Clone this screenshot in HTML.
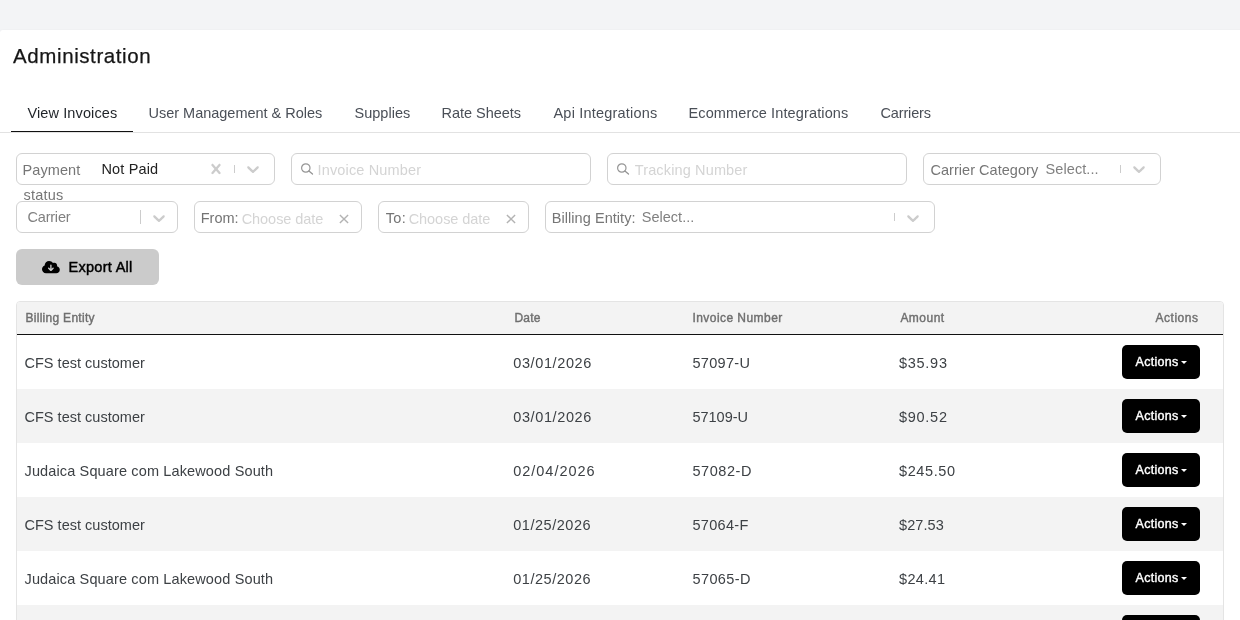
<!DOCTYPE html>
<html lang="en">
<head>
<meta charset="utf-8">
<title>Administration</title>
<meta name="viewport" content="width=1240">
<style>
*{box-sizing:border-box}
html,body{margin:0;padding:0}
body{width:1240px;height:620px;overflow:hidden;background:#f3f4f6;font-family:"Liberation Sans", Arial, sans-serif;position:relative;-webkit-font-smoothing:antialiased}
#app{position:absolute;left:0;top:0;width:1240px;height:620px;overflow:hidden;will-change:transform}
.panel{position:absolute;left:0;top:30px;width:1260px;height:640px;background:#fff;border-radius:3px 0 0 0;box-shadow:0 0 2px rgba(0,0,0,.05)}
.t{position:absolute;white-space:nowrap;margin:0;font-weight:400;display:block;text-decoration:none}
.tabs{position:absolute;left:0;top:132px;width:1240px;height:1px;background:#e2e2e2}
.tabline{position:absolute;left:11px;top:131px;width:122px;height:1px;background:#111}
.box{position:absolute;border:1px solid #d2d2d2;border-radius:6px;background:#fff}
.chev,.ico{position:absolute;display:block}
.chev path{fill:#ccc}
.sep{position:absolute;width:1px;background:#ccc;display:block}
.export{position:absolute;left:16px;top:249px;width:143px;height:36px;background:#cbcbcb;border:0;border-radius:6px;padding:0}
.tbl{position:absolute;left:16px;top:301px;width:1208px;height:400px;border:1px solid #e4e4e4;border-radius:4px;background:#fff;overflow:hidden}
.thead{position:absolute;left:0;top:0;width:1206px;height:33px;background:#f3f3f3;border-bottom:1px solid #111}
.row{position:absolute;left:0;width:1206px;height:54px}
.row.alt{background:#f3f3f3}
.abtn{position:absolute;left:1105px;top:10px;width:78px;height:34px;background:#000;border-radius:5px}
.caret{position:absolute;left:59.2px;top:15.8px;width:0;height:0;border-left:3.1px solid transparent;border-right:3.1px solid transparent;border-top:3.5px solid #fff}
</style>
</head>
<body>
<div id="app">
<div class="panel"></div>
<h1 class="t" style="left:13.10px;top:41px;font-size:20.5px;line-height:29px;letter-spacing:0.586px;color:#161616;-webkit-text-stroke:0.25px #161616;">Administration</h1>
<div class="tabs"></div><div class="tabline"></div>
<nav>
<a class="t" style="left:27.40px;top:103px;font-size:14.5px;line-height:20px;letter-spacing:0.122px;color:#1f2328;">View Invoices</a>
<a class="t" style="left:148.50px;top:103px;font-size:14.5px;line-height:20px;letter-spacing:-0.015px;color:#4a4f57;">User Management &amp; Roles</a>
<a class="t" style="left:354.50px;top:103px;font-size:14.5px;line-height:20px;letter-spacing:0.018px;color:#4a4f57;">Supplies</a>
<a class="t" style="left:441.50px;top:103px;font-size:14.5px;line-height:20px;letter-spacing:-0.03px;color:#4a4f57;">Rate Sheets</a>
<a class="t" style="left:553.50px;top:103px;font-size:14.5px;line-height:20px;letter-spacing:0.2px;color:#4a4f57;">Api Integrations</a>
<a class="t" style="left:688.50px;top:103px;font-size:14.5px;line-height:20px;letter-spacing:0.124px;color:#4a4f57;">Ecommerce Integrations</a>
<a class="t" style="left:880.50px;top:103px;font-size:14.5px;line-height:20px;letter-spacing:-0.151px;color:#4a4f57;">Carriers</a>
</nav>
<div class="box" style="left:16px;top:153px;width:259px;height:32px"></div>
<span class="t" style="left:22.50px;top:160px;font-size:14.5px;line-height:20px;letter-spacing:0.093px;color:#767676;">Payment</span><span class="t" style="left:23.50px;top:185px;font-size:14.5px;line-height:20px;letter-spacing:0.193px;color:#767676;">status</span><span class="t" style="left:101.50px;top:159px;font-size:14.5px;line-height:20px;letter-spacing:0.136px;color:#222;">Not Paid</span><svg class="chev" style="left:206px;top:159px" width="20" height="20" viewBox="0 0 20 20" aria-hidden="true"><path d="M14.348 14.849c-0.469 0.469-1.229 0.469-1.697 0l-2.651-3.030-2.651 3.029c-0.469 0.469-1.229 0.469-1.697 0-0.469-0.469-0.469-1.229 0-1.697l2.758-3.15-2.759-3.152c-0.469-0.469-0.469-1.228 0-1.697s1.228-0.469 1.697 0l2.652 3.031 2.651-3.031c0.469-0.469 1.228-0.469 1.697 0s0.469 1.229 0 1.697l-2.758 3.152 2.758 3.15c0.469 0.469 0.469 1.229 0 1.698z"/></svg><i class="sep" style="left:234px;top:165px;height:8px"></i><svg class="chev" style="left:243px;top:159px" width="20" height="20" viewBox="0 0 20 20" aria-hidden="true"><path d="M4.516 7.548c0.436-0.446 1.043-0.481 1.576 0l3.908 3.747 3.908-3.747c0.533-0.481 1.141-0.446 1.574 0 0.436 0.445 0.408 1.197 0 1.615-0.406 0.418-4.695 4.502-4.695 4.502-0.217 0.223-0.502 0.335-0.787 0.335s-0.57-0.112-0.789-0.335c0 0-4.287-4.084-4.695-4.502s-0.436-1.17 0-1.615z"/></svg>
<div class="box" style="left:291px;top:153px;width:300px;height:32px"></div><svg class="ico" style="left:300px;top:162px" width="14" height="14" viewBox="0 0 14 14" aria-hidden="true"><circle cx="5.8" cy="6" r="4.2" fill="none" stroke="#959595" stroke-width="1.2"/><path d="M8.9 9.1L12.5 12.1" stroke="#959595" stroke-width="1.3" stroke-linecap="round"/></svg><span class="t" style="left:317.50px;top:160px;font-size:14.5px;line-height:20px;letter-spacing:0.157px;color:#d4d4d4;">Invoice Number</span>
<div class="box" style="left:607px;top:153px;width:300px;height:32px"></div><svg class="ico" style="left:616px;top:162px" width="14" height="14" viewBox="0 0 14 14" aria-hidden="true"><circle cx="5.8" cy="6" r="4.2" fill="none" stroke="#959595" stroke-width="1.2"/><path d="M8.9 9.1L12.5 12.1" stroke="#959595" stroke-width="1.3" stroke-linecap="round"/></svg><span class="t" style="left:634.75px;top:160px;font-size:14.5px;line-height:20px;letter-spacing:0.137px;color:#d4d4d4;">Tracking Number</span>
<div class="box" style="left:923px;top:153px;width:238px;height:32px"></div><span class="t" style="left:930.50px;top:160px;font-size:14.5px;line-height:20px;letter-spacing:0.032px;color:#767676;">Carrier Category</span><span class="t" style="left:1045.60px;top:159px;font-size:14.5px;line-height:20px;letter-spacing:0.068px;color:#808080;">Select...</span><i class="sep" style="left:1120px;top:165px;height:8px"></i><svg class="chev" style="left:1129px;top:159px" width="20" height="20" viewBox="0 0 20 20" aria-hidden="true"><path d="M4.516 7.548c0.436-0.446 1.043-0.481 1.576 0l3.908 3.747 3.908-3.747c0.533-0.481 1.141-0.446 1.574 0 0.436 0.445 0.408 1.197 0 1.615-0.406 0.418-4.695 4.502-4.695 4.502-0.217 0.223-0.502 0.335-0.787 0.335s-0.57-0.112-0.789-0.335c0 0-4.287-4.084-4.695-4.502s-0.436-1.17 0-1.615z"/></svg>
<div class="box" style="left:16px;top:201px;width:162px;height:32px"></div><span class="t" style="left:27.50px;top:207px;font-size:14.5px;line-height:20px;letter-spacing:-0.205px;color:#808080;">Carrier</span><i class="sep" style="left:140px;top:210px;height:14px"></i><svg class="chev" style="left:149px;top:207.5px" width="20" height="20" viewBox="0 0 20 20" aria-hidden="true"><path d="M4.516 7.548c0.436-0.446 1.043-0.481 1.576 0l3.908 3.747 3.908-3.747c0.533-0.481 1.141-0.446 1.574 0 0.436 0.445 0.408 1.197 0 1.615-0.406 0.418-4.695 4.502-4.695 4.502-0.217 0.223-0.502 0.335-0.787 0.335s-0.57-0.112-0.789-0.335c0 0-4.287-4.084-4.695-4.502s-0.436-1.17 0-1.615z"/></svg>
<div class="box" style="left:194px;top:201px;width:168px;height:32px"></div><span class="t" style="left:200.80px;top:208px;font-size:14.5px;line-height:20px;letter-spacing:-0.032px;color:#747474;">From:</span><span class="t" style="left:241.70px;top:209px;font-size:14.5px;line-height:20px;letter-spacing:-0.056px;color:#d4d4d4;">Choose date</span><svg class="ico" style="left:338.8px;top:214.4px" width="10" height="10" viewBox="0 0 10 10" aria-hidden="true"><path d="M0.9 0.9L9.1 9.1M9.1 0.9L0.9 9.1" stroke="#b3b3b3" stroke-width="1.4" fill="none"/></svg>
<div class="box" style="left:378px;top:201px;width:151px;height:32px"></div><span class="t" style="left:385.75px;top:208px;font-size:14.5px;line-height:20px;letter-spacing:0.368px;color:#747474;">To:</span><span class="t" style="left:408.70px;top:209px;font-size:14.5px;line-height:20px;letter-spacing:-0.056px;color:#d4d4d4;">Choose date</span><svg class="ico" style="left:505.5px;top:214.4px" width="10" height="10" viewBox="0 0 10 10" aria-hidden="true"><path d="M0.9 0.9L9.1 9.1M9.1 0.9L0.9 9.1" stroke="#b3b3b3" stroke-width="1.4" fill="none"/></svg>
<div class="box" style="left:545px;top:201px;width:390px;height:32px"></div><span class="t" style="left:551.75px;top:208px;font-size:14.5px;line-height:20px;letter-spacing:0.055px;color:#767676;">Billing Entity:</span><span class="t" style="left:641.70px;top:207px;font-size:14.5px;line-height:20px;letter-spacing:0.03px;color:#808080;">Select...</span><i class="sep" style="left:894px;top:213px;height:8px"></i><svg class="chev" style="left:903px;top:207.5px" width="20" height="20" viewBox="0 0 20 20" aria-hidden="true"><path d="M4.516 7.548c0.436-0.446 1.043-0.481 1.576 0l3.908 3.747 3.908-3.747c0.533-0.481 1.141-0.446 1.574 0 0.436 0.445 0.408 1.197 0 1.615-0.406 0.418-4.695 4.502-4.695 4.502-0.217 0.223-0.502 0.335-0.787 0.335s-0.57-0.112-0.789-0.335c0 0-4.287-4.084-4.695-4.502s-0.436-1.17 0-1.615z"/></svg>
<button class="export" type="button"></button><svg class="ico" style="left:41.9px;top:259.5px" width="17.8" height="14.24" viewBox="0 0 640 512" aria-hidden="true"><path fill="#000" d="M144 480C64.500 480 0 415.500 0 336c0-62.800 40.200-116.200 96.200-135.900c-.1-2.700-.2-5.400-.2-8.100c0-88.400 71.600-160 160-160c59.300 0 111 32.200 138.700 80.200C409.900 102 428.300 96 448 96c53 0 96 43 96 96c0 12.200-2.300 23.800-6.400 34.600C596 238.400 640 290.100 640 352c0 70.700-57.300 128-128 128H144zm79-167l80 80c9.400 9.400 24.600 9.400 33.900 0l80-80c9.400-9.400 9.400-24.600 0-33.900s-24.600-9.400-33.900 0l-39 39V184c0-13.300-10.700-24-24-24s-24 10.700-24 24V318.100l-39-39c-9.400-9.400-24.600-9.400-33.900 0s-9.400 24.600 0 33.900z"/></svg><span class="t" style="left:68.50px;top:257px;font-size:14.5px;line-height:20px;letter-spacing:0.286px;color:#000;-webkit-text-stroke:0.45px #000;">Export All</span>
<div class="tbl"><div class="thead"></div>
<span class="t" style="left:8.45px;top:8px;font-size:12px;line-height:17px;letter-spacing:0.288px;color:#6f6f6f;-webkit-text-stroke:0.4px #6f6f6f;">Billing Entity</span><span class="t" style="left:497.40px;top:8px;font-size:12px;line-height:17px;letter-spacing:0.242px;color:#6f6f6f;-webkit-text-stroke:0.4px #6f6f6f;">Date</span><span class="t" style="left:675.45px;top:8px;font-size:12px;line-height:17px;letter-spacing:0.447px;color:#6f6f6f;-webkit-text-stroke:0.4px #6f6f6f;">Invoice Number</span><span class="t" style="left:883.40px;top:8px;font-size:12px;line-height:17px;letter-spacing:0.476px;color:#6f6f6f;-webkit-text-stroke:0.4px #6f6f6f;">Amount</span><span class="t" style="left:1138.50px;top:8px;font-size:12px;line-height:17px;letter-spacing:0.525px;color:#6f6f6f;-webkit-text-stroke:0.4px #6f6f6f;">Actions</span>
<div class="row" style="top:33px"><span class="t" style="left:7.50px;top:18px;font-size:14.5px;line-height:20px;letter-spacing:0.017px;color:#3d4145;">CFS test customer</span><span class="t" style="left:496.25px;top:18px;font-size:14.5px;line-height:20px;letter-spacing:0.61px;color:#3d4145;">03/01/2026</span><span class="t" style="left:675.50px;top:18px;font-size:14.5px;line-height:20px;letter-spacing:0.308px;color:#3d4145;">57097-U</span><span class="t" style="left:882.00px;top:18px;font-size:14.5px;line-height:20px;letter-spacing:0.723px;color:#3d4145;">$35.93</span><div class="abtn"><span class="t" style="left:13.60px;top:8px;font-size:12.5px;line-height:18px;letter-spacing:0.26px;color:#fff;-webkit-text-stroke:0.4px #fff;">Actions</span><i class="caret"></i></div></div>
<div class="row alt" style="top:87px"><span class="t" style="left:7.50px;top:18px;font-size:14.5px;line-height:20px;letter-spacing:0.017px;color:#3d4145;">CFS test customer</span><span class="t" style="left:496.25px;top:18px;font-size:14.5px;line-height:20px;letter-spacing:0.61px;color:#3d4145;">03/01/2026</span><span class="t" style="left:675.50px;top:18px;font-size:14.5px;line-height:20px;letter-spacing:-0.025px;color:#3d4145;">57109-U</span><span class="t" style="left:882.00px;top:18px;font-size:14.5px;line-height:20px;letter-spacing:0.723px;color:#3d4145;">$90.52</span><div class="abtn"><span class="t" style="left:13.60px;top:8px;font-size:12.5px;line-height:18px;letter-spacing:0.26px;color:#fff;-webkit-text-stroke:0.4px #fff;">Actions</span><i class="caret"></i></div></div>
<div class="row" style="top:141px"><span class="t" style="left:7.50px;top:18px;font-size:14.5px;line-height:20px;letter-spacing:0.135px;color:#3d4145;">Judaica Square com Lakewood South</span><span class="t" style="left:496.25px;top:18px;font-size:14.5px;line-height:20px;letter-spacing:0.971px;color:#3d4145;">02/04/2026</span><span class="t" style="left:675.50px;top:18px;font-size:14.5px;line-height:20px;letter-spacing:0.558px;color:#3d4145;">57082-D</span><span class="t" style="left:882.00px;top:18px;font-size:14.5px;line-height:20px;letter-spacing:0.608px;color:#3d4145;">$245.50</span><div class="abtn"><span class="t" style="left:13.60px;top:8px;font-size:12.5px;line-height:18px;letter-spacing:0.26px;color:#fff;-webkit-text-stroke:0.4px #fff;">Actions</span><i class="caret"></i></div></div>
<div class="row alt" style="top:195px"><span class="t" style="left:7.50px;top:18px;font-size:14.5px;line-height:20px;letter-spacing:0.017px;color:#3d4145;">CFS test customer</span><span class="t" style="left:496.25px;top:18px;font-size:14.5px;line-height:20px;letter-spacing:0.527px;color:#3d4145;">01/25/2026</span><span class="t" style="left:675.50px;top:18px;font-size:14.5px;line-height:20px;letter-spacing:0.308px;color:#3d4145;">57064-F</span><span class="t" style="left:882.00px;top:18px;font-size:14.5px;line-height:20px;letter-spacing:0.083px;color:#3d4145;">$27.53</span><div class="abtn"><span class="t" style="left:13.60px;top:8px;font-size:12.5px;line-height:18px;letter-spacing:0.26px;color:#fff;-webkit-text-stroke:0.4px #fff;">Actions</span><i class="caret"></i></div></div>
<div class="row" style="top:249px"><span class="t" style="left:7.50px;top:18px;font-size:14.5px;line-height:20px;letter-spacing:0.135px;color:#3d4145;">Judaica Square com Lakewood South</span><span class="t" style="left:496.25px;top:18px;font-size:14.5px;line-height:20px;letter-spacing:0.527px;color:#3d4145;">01/25/2026</span><span class="t" style="left:675.50px;top:18px;font-size:14.5px;line-height:20px;letter-spacing:0.392px;color:#3d4145;">57065-D</span><span class="t" style="left:882.00px;top:18px;font-size:14.5px;line-height:20px;letter-spacing:0.343px;color:#3d4145;">$24.41</span><div class="abtn"><span class="t" style="left:13.60px;top:8px;font-size:12.5px;line-height:18px;letter-spacing:0.26px;color:#fff;-webkit-text-stroke:0.4px #fff;">Actions</span><i class="caret"></i></div></div>
<div class="row alt" style="top:303px"><span class="t" style="left:7.50px;top:18px;font-size:14.5px;line-height:20px;letter-spacing:0.017px;color:#3d4145;">CFS test customer</span><span class="t" style="left:496.25px;top:18px;font-size:14.5px;line-height:20px;letter-spacing:0.527px;color:#3d4145;">01/25/2026</span><span class="t" style="left:675.50px;top:18px;font-size:14.5px;line-height:20px;letter-spacing:0.308px;color:#3d4145;">57066-F</span><span class="t" style="left:882.00px;top:18px;font-size:14.5px;line-height:20px;letter-spacing:0.343px;color:#3d4145;">$31.20</span><div class="abtn"><span class="t" style="left:13.60px;top:8px;font-size:12.5px;line-height:18px;letter-spacing:0.26px;color:#fff;-webkit-text-stroke:0.4px #fff;">Actions</span><i class="caret"></i></div></div>
</div>
</div>
</body>
</html>
